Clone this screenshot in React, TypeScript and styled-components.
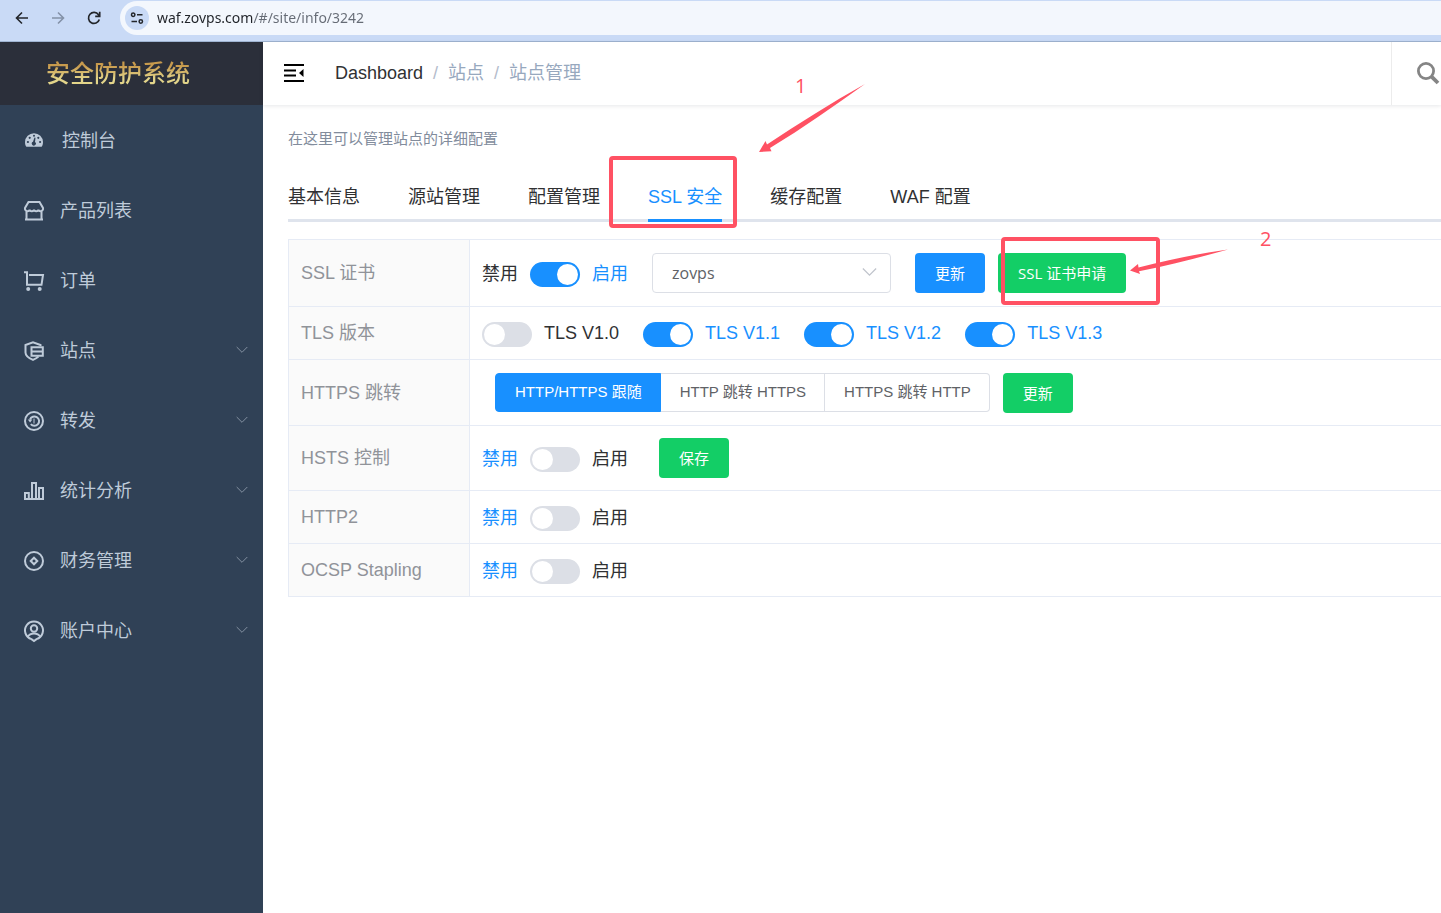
import React, { useState } from "react";
import styled, { createGlobalStyle, css } from "styled-components";

const c = {
  blue: "#1890ff",
  green: "#13ce66",
  text: "#303133",
  regular: "#606266",
  muted: "#909399",
  border: "#dcdfe6",
  line: "#e6ebf5",
  mark: "#ff5163",
};

const sans = '"Liberation Sans", "Noto Sans CJK SC", sans-serif';
const humanist = '"Open Sans", "Noto Sans CJK SC", sans-serif';

const GlobalStyle = createGlobalStyle`
  * { box-sizing: border-box; }
  body {
    margin: 0;
    background: #fff;
    color: ${c.text};
    font: 400 18px/24px ${sans};
    overflow: hidden;
  }
  button, input, select { font: inherit; color: inherit; }
`;

const Page = styled.div`
  position: relative;
  display: flex;
  flex-direction: column;
  min-height: 100vh;
  overflow: hidden;
`;

/* Browser bar */

const BrowserBar = styled.header`
  display: flex;
  align-items: flex-start;
  height: 42px;
  padding: 1px 0 0 12px;
  background: #c9daf6;
  border-bottom: 1px solid #9fb4d1;
`;

const NavButton = styled.button`
  display: flex;
  align-items: center;
  justify-content: center;
  width: 36px;
  height: 34px;
  padding: 0 16px 0 0;
  border: 0;
  background: none;
  color: #23262b;
  &:disabled { color: #8492a8; }
`;

const AddressBar = styled.div`
  flex: 1;
  display: flex;
  align-items: center;
  gap: 8px;
  height: 34px;
  padding-left: 5px;
  border-radius: 17px 0 0 17px;
  background: #f3f7fd;
`;

const SiteInfo = styled.button`
  display: flex;
  align-items: center;
  justify-content: center;
  width: 24px;
  height: 24px;
  padding: 0;
  border: 0;
  border-radius: 50%;
  background: #c9daf6;
  color: #23262b;
`;

const AddressInput = styled.input`
  flex: 1;
  height: 24px;
  padding: 0 0 2px;
  border: 0;
  outline: 0;
  font: 400 14px/22px "Noto Sans", sans-serif;
  background: linear-gradient(90deg, #202329 0 96px, #656b75 96px);
  background-clip: text;
  -webkit-background-clip: text;
  color: transparent;
`;

/* Sidebar */

const Body = styled.div`
  flex: 1;
  display: flex;
`;

const Sidebar = styled.aside`
  flex: 0 0 263px;
  background: #304156;
`;

const Logo = styled.div`
  height: 63px;
  padding-left: 46px;
  background: #2b2f3a;
  font: 500 24px/63px ${sans};
  span {
    background: linear-gradient(#c79a4d 20%, #e3d58a 70%);
    background-clip: text;
    -webkit-background-clip: text;
    color: transparent;
  }
`;

const MenuItem = styled.a<{ $wide?: boolean }>`
  display: flex;
  align-items: center;
  gap: ${(p) => (p.$wide ? 18 : 16)}px;
  height: 70px;
  padding: 2px 15px 0 24px;
  color: #bfcbd9;
  text-decoration: none;
  span { flex: 1; }
`;

/* Main column */

const Main = styled.main`
  flex: 1;
  min-width: 0;
`;

const TopBar = styled.div`
  display: flex;
  align-items: center;
  height: 63px;
  padding-left: 21px;
  box-shadow: 0 1px 4px rgba(0, 21, 41, 0.1);
`;

const IconButton = styled.button`
  display: flex;
  padding: 0 0 2px;
  border: 0;
  background: none;
  color: #000;
`;

const Breadcrumb = styled.nav`
  flex: 1;
  display: flex;
  gap: 10px;
  padding: 0 0 2px 30px;
  color: #97a8be;
  a { color: ${c.text}; text-decoration: none; }
  i { color: #b4bccc; font-style: normal; }
`;

const SearchBox = styled.div`
  display: flex;
  align-items: center;
  width: 50px;
  height: 63px;
  padding-left: 24px;
  border-left: 1px solid #ececec;
`;

const Content = styled.div`
  padding: 22px 0 0 25px;
`;

const Description = styled.p`
  margin: 0;
  font-size: 15px;
  line-height: 24px;
  color: #828c9c;
`;

const Tabs = styled.div`
  display: flex;
  gap: 48px;
  height: 71px;
  padding-top: 21px;
  margin-bottom: 17px;
  border-bottom: 3px solid #dfe4ed;
`;

const Tab = styled.button<{ $active: boolean }>`
  height: 50px;
  padding: 4px 0 1px;
  border: 0;
  border-bottom: 3px solid ${(p) => (p.$active ? c.blue : "transparent")};
  background: none;
  line-height: 42px;
  white-space: nowrap;
  color: ${(p) => (p.$active ? c.blue : c.text)};
`;

const Settings = styled.table`
  width: 100%;
  border-collapse: collapse;
  th, td {
    border: 1px solid ${c.line};
    border-right: 0;
    padding: 0 12px;
    text-align: left;
    font-weight: inherit;
  }
  th {
    width: 181px;
    background: #fafafa;
    color: ${c.muted};
  }
`;

const Row = styled.tr<{ $h: number }>`
  height: ${(p) => p.$h}px;
`;

const Line = styled.div<{ $gap?: number }>`
  display: flex;
  align-items: center;
  gap: ${(p) => p.$gap ?? 24}px;
  white-space: nowrap;
`;

const SwitchWrap = styled.label`
  display: flex;
  align-items: center;
  gap: 12px;
`;

const SwitchText = styled.span<{ $on: boolean; $latin?: boolean }>`
  padding-top: ${(p) => (p.$latin ? 0 : 2)}px;
  color: ${(p) => (p.$on ? c.blue : c.text)};
`;

const SwitchInput = styled.input`
  appearance: none;
  width: 50px;
  height: 25px;
  margin: 2px 0 0;
  padding: 2px;
  border-radius: 13px;
  background: ${c.border};
  &::before {
    content: "";
    display: block;
    width: 21px;
    height: 21px;
    border-radius: 50%;
    background: #fff;
  }
  &:checked { background: ${c.blue}; }
  &:checked::before { margin-left: auto; }
`;

const SelectWrap = styled.div`
  display: grid;
  align-items: center;
  width: 239px;
  svg { grid-area: 1 / 1; justify-self: end; margin-right: 14px; pointer-events: none; }
`;

const Select = styled.select`
  grid-area: 1 / 1;
  appearance: none;
  height: 40px;
  padding: 0 19px;
  border: 1px solid ${c.border};
  border-radius: 4px;
  background: #fff;
  color: ${c.regular};
  font: 400 16px/24px ${humanist};
`;

const Button = styled.button<{ $tone: "blue" | "green" }>`
  height: 40px;
  padding: 0 20px;
  border: 0;
  border-radius: 4px;
  background: ${(p) => c[p.$tone]};
  color: #fff;
  font: 400 15px/24px ${humanist};
`;

const Actions = styled.div<{ $indent?: number }>`
  display: flex;
  gap: 13px;
  padding-left: ${(p) => p.$indent ?? 0}px;
`;

const RadioGroup = styled.div`
  display: flex;
  height: 39px;
`;

const RadioOption = styled.label<{ $on: boolean }>`
  display: flex;
  align-items: center;
  padding: 0 18px 0 19px;
  border: 1px solid ${c.border};
  border-left-width: 0;
  font-size: 15px;
  color: ${c.regular};
  &:first-child { border-left-width: 1px; border-radius: 4px 0 0 4px; }
  &:last-child { border-radius: 0 4px 4px 0; }
  ${(p) => p.$on && css`
    background: ${c.blue};
    border-color: ${c.blue};
    color: #fff;
  `}
  input { appearance: none; width: 0; height: 0; margin: 0; }
`;

/* Annotations drawn over the page */

const MarkBox = styled.div<{ $x: number; $y: number; $w: number; $h: number }>`
  position: absolute;
  left: ${(p) => p.$x}px;
  top: ${(p) => p.$y}px;
  width: ${(p) => p.$w}px;
  height: ${(p) => p.$h}px;
  border: 4px solid ${c.mark};
  border-radius: 4px;
  pointer-events: none;
`;

const MarkNumber = styled.span<{ $x: number; $y: number }>`
  position: absolute;
  left: ${(p) => p.$x}px;
  top: ${(p) => p.$y}px;
  font: 400 20px/24px ${humanist};
  color: ${c.mark};
`;

const Arrows = styled.svg`
  position: absolute;
  left: 0;
  top: 0;
  pointer-events: none;
`;

const icons: Record<string, React.ReactNode> = {
  dashboard: (
    <>
      <path fill="currentColor" stroke="none" d="M10 2.200A9 9 0 0 0 1 11.100c0 1.800.4 3.300 1 4.200.2.400.5.500.9.500h14.200c.4 0 .7-.1.900-.5.6-.9 1-2.400 1-4.200A9 9 0 0 0 10 2.200z" />
      <g fill="#304156" stroke="none">
        <circle cx="3.900" cy="11" r="1.100" /><circle cx="5.700" cy="6.800" r="1.100" />
        <circle cx="10" cy="4.700" r="1" /><circle cx="14.300" cy="6.800" r="1.100" />
        <circle cx="16.100" cy="11" r="1.100" />
        <path d="M10.500 6.500l1 .2-.5 4.300a2 2 0 1 1-2-.2z" />
      </g>
    </>
  ),
  shop: <path d="M4.500 1h11l3.500 6c.5 1.600-.8 3.200-2.400 3.200-1.500 0-2.200-.8-2.200-1.700 0 1-.9 1.700-2.200 1.700S10 9.500 10 8.500c0 1-.9 1.700-2.200 1.700S5.600 9.500 5.600 8.500c0 .9-.7 1.700-2.200 1.700S.5 8.600 1 7zM2.500 10v8.500h15V10M1 18.600h18" />,
  cart: (
    <>
      <path d="M0 1.200h3v12.600h14.500L19 4H5" />
      <circle cx="4.200" cy="18" r="2" fill="currentColor" stroke="none" />
      <circle cx="15.700" cy="18" r="2" fill="currentColor" stroke="none" />
    </>
  ),
  shield: (
    <>
      <path d="M16.500 5V4L9 1.200 1.500 4v7.500c0 3.300 3.500 5.700 7.500 7.400 2-.9 4-2 5.500-3.400" />
      <path d="M7.500 6.200h11.300v8.600H7.500zM7.500 10.500h11" />
    </>
  ),
  forward: (
    <>
      <circle cx="10" cy="10" r="9" />
      <path d="M6.800 13.200A4.700 4.700 0 1 0 6 8.500" strokeWidth="2" />
      <path d="M3.800 8.500h4.600L6.100 11.500z" fill="currentColor" stroke="none" />
      <path d="M10 7.500v5" strokeWidth="1" />
    </>
  ),
  chart: <path d="M1 12h3.800v6H1zM8 2h4v16H8zM15 7h4v11h-4zM0 18h20" />,
  finance: (
    <>
      <circle cx="10" cy="10" r="9" />
      <path d="M10 6.700l3.300 3.300-3.300 3.300L6.700 10z" />
    </>
  ),
  account: (
    <>
      <path d="M7.500 18.100a9 9 0 1 1 5 0L10 20z" />
      <circle cx="10" cy="7.500" r="3.200" />
      <path d="M3.700 15.700c1.500-2.600 3.800-3.300 6.300-3.300s4.800.7 6.300 3.300" />
    </>
  ),
};

const MenuIcon = ({ name }: { name: string }) => (
  <svg width="20" height="20" viewBox="0 0 20 20" fill="none" stroke="currentColor" strokeWidth="2" overflow="visible" aria-hidden="true">
    {icons[name]}
  </svg>
);

const Chevron = ({ size, color }: { size: number; color: string }) => (
  <svg width={size} height={size} viewBox="0 0 12 12" fill="none" stroke={color} aria-hidden="true">
    <path d="M.7 2L6 7.300 11.300 2" />
  </svg>
);

const menu = [
  { icon: "dashboard", label: "控制台" },
  { icon: "shop", label: "产品列表" },
  { icon: "cart", label: "订单" },
  { icon: "shield", label: "站点", open: true },
  { icon: "forward", label: "转发", open: true },
  { icon: "chart", label: "统计分析", open: true },
  { icon: "finance", label: "财务管理", open: true },
  { icon: "account", label: "账户中心", open: true },
];

const tabs = ["基本信息", "源站管理", "配置管理", "SSL 安全", "缓存配置", "WAF 配置"];
const redirects = ["HTTP/HTTPS 跟随", "HTTP 跳转 HTTPS", "HTTPS 跳转 HTTP"];

const Toggle = ({ initial = false }: { initial?: boolean }) => {
  const [on, setOn] = useState(initial);
  return (
    <SwitchWrap>
      <SwitchText $on={!on}>禁用</SwitchText>
      <SwitchInput type="checkbox" role="switch" checked={on} onChange={() => setOn(!on)} />
      <SwitchText $on={on}>启用</SwitchText>
    </SwitchWrap>
  );
};

const VersionToggle = ({ label, initial = false }: { label: string; initial?: boolean }) => {
  const [on, setOn] = useState(initial);
  return (
    <SwitchWrap>
      <SwitchInput type="checkbox" role="switch" checked={on} onChange={() => setOn(!on)} />
      <SwitchText $on={on} $latin>{label}</SwitchText>
    </SwitchWrap>
  );
};

export default function App() {
  const [tab, setTab] = useState("SSL 安全");
  const [redirect, setRedirect] = useState(redirects[0]);

  return (
    <Page>
      <GlobalStyle />
      <BrowserBar>
        <NavButton aria-label="后退">
          <svg width="14" height="14" viewBox="0 0 14 14" fill="none" stroke="currentColor" strokeWidth="1.600"><path d="M13 7H2M7 1.500L1.500 7 7 12.500" /></svg>
        </NavButton>
        <NavButton aria-label="前进" disabled>
          <svg width="14" height="14" viewBox="0 0 14 14" fill="none" stroke="currentColor" strokeWidth="1.600"><path d="M1 7h11M7 1.500L12.500 7 7 12.500" /></svg>
        </NavButton>
        <NavButton aria-label="刷新">
          <svg width="14" height="14" viewBox="0 0 14 14" fill="none" stroke="currentColor" strokeWidth="1.700"><path d="M12.300 8.500A5.500 5.500 0 1 1 11.500 3.700L12.500 4.900M12.700 .8v4.500H8.200" /></svg>
        </NavButton>
        <AddressBar>
          <SiteInfo aria-label="网站信息">
            <svg width="14" height="14" viewBox="0 0 14 14" fill="none" stroke="currentColor" strokeWidth="1.500">
              <circle cx="3.200" cy="3.800" r="1.700" /><path d="M7 3.800h5.500M1.500 10.500H7" /><circle cx="10.800" cy="10.500" r="1.700" />
            </svg>
          </SiteInfo>
          <AddressInput aria-label="地址" defaultValue="waf.zovps.com/#/site/info/3242" />
        </AddressBar>
      </BrowserBar>

      <Body>
        <Sidebar>
          <Logo><span>安全防护系统</span></Logo>
          <nav>
            {menu.map((m, i) => (
              <MenuItem key={m.label} href="#" $wide={i === 0}>
                <MenuIcon name={m.icon} />
                <span>{m.label}</span>
                {m.open && <Chevron size={12} color="#8491a1" />}
              </MenuItem>
            ))}
          </nav>
        </Sidebar>

        <Main>
          <TopBar>
            <IconButton aria-label="收起菜单">
              <svg width="21" height="18" viewBox="0 0 21 18" fill="none" stroke="currentColor" strokeWidth="2">
                <path d="M0 1h20M0 6.500h12M0 11.500h12M0 17h20" />
                <path d="M19.500 5v8L15 9z" fill="currentColor" stroke="none" />
              </svg>
            </IconButton>
            <Breadcrumb>
              <a href="#">Dashboard</a><i>/</i><span>站点</span><i>/</i><span>站点管理</span>
            </Breadcrumb>
            <SearchBox>
              <IconButton aria-label="搜索">
                <svg width="25" height="24" viewBox="0 0 25 24" fill="none" stroke="#858585" strokeWidth="2.800">
                  <circle cx="10" cy="10" r="7.600" /><path d="M15.300 15.300l6.700 6.700" strokeWidth="3.800" />
                </svg>
              </IconButton>
            </SearchBox>
          </TopBar>

          <Content>
            <Description>在这里可以管理站点的详细配置</Description>
            <Tabs role="tablist">
              {tabs.map((t) => (
                <Tab key={t} role="tab" aria-selected={t === tab} $active={t === tab} onClick={() => setTab(t)}>{t}</Tab>
              ))}
            </Tabs>

            <Settings>
              <tbody>
                <Row $h={67}>
                  <th scope="row">SSL 证书</th>
                  <td>
                    <Line>
                      <Toggle initial />
                      <SelectWrap>
                        <Select aria-label="证书"><option>zovps</option></Select>
                        <Chevron size={15} color="#c0c4cc" />
                      </SelectWrap>
                      <Actions>
                        <Button $tone="blue">更新</Button>
                        <Button $tone="green">SSL 证书申请</Button>
                      </Actions>
                    </Line>
                  </td>
                </Row>
                <Row $h={53}>
                  <th scope="row">TLS 版本</th>
                  <td>
                    <Line>
                      <VersionToggle label="TLS V1.0" />
                      <VersionToggle label="TLS V1.1" initial />
                      <VersionToggle label="TLS V1.2" initial />
                      <VersionToggle label="TLS V1.3" initial />
                    </Line>
                  </td>
                </Row>
                <Row $h={66}>
                  <th scope="row">HTTPS 跳转</th>
                  <td>
                    <Actions $indent={13}>
                      <RadioGroup role="radiogroup" aria-label="HTTPS 跳转">
                        {redirects.map((r) => (
                          <RadioOption key={r} $on={r === redirect}>
                            <input type="radio" name="redirect" checked={r === redirect} onChange={() => setRedirect(r)} />
                            {r}
                          </RadioOption>
                        ))}
                      </RadioGroup>
                      <Button $tone="green">更新</Button>
                    </Actions>
                  </td>
                </Row>
                <Row $h={65}>
                  <th scope="row">HSTS 控制</th>
                  <td>
                    <Line $gap={31}>
                      <Toggle />
                      <Button $tone="green">保存</Button>
                    </Line>
                  </td>
                </Row>
                <Row $h={53}>
                  <th scope="row">HTTP2</th>
                  <td><Line><Toggle /></Line></td>
                </Row>
                <Row $h={53}>
                  <th scope="row">OCSP Stapling</th>
                  <td><Line><Toggle /></Line></td>
                </Row>
              </tbody>
            </Settings>
          </Content>
        </Main>
      </Body>

      <MarkBox $x={609} $y={156} $w={128} $h={72} />
      <MarkBox $x={1001} $y={237} $w={159} $h={68} />
      <MarkNumber $x={795} $y={74}>1</MarkNumber>
      <MarkNumber $x={1260} $y={227}>2</MarkNumber>
      <Arrows width="1300" height="320" fill={c.mark} aria-hidden="true">
        <path d="M759 152L765.500 141 767 144.500C798 124 831 103 865 84C834 106 803 128 770 148L771.500 151.200z" />
        <path d="M1130 270.500L1138 264 1138.500 267.500C1168 260 1198 253.500 1228 249.500C1199 257.500 1169 265.500 1139 271.200L1140 274z" />
      </Arrows>
    </Page>
  );
}
